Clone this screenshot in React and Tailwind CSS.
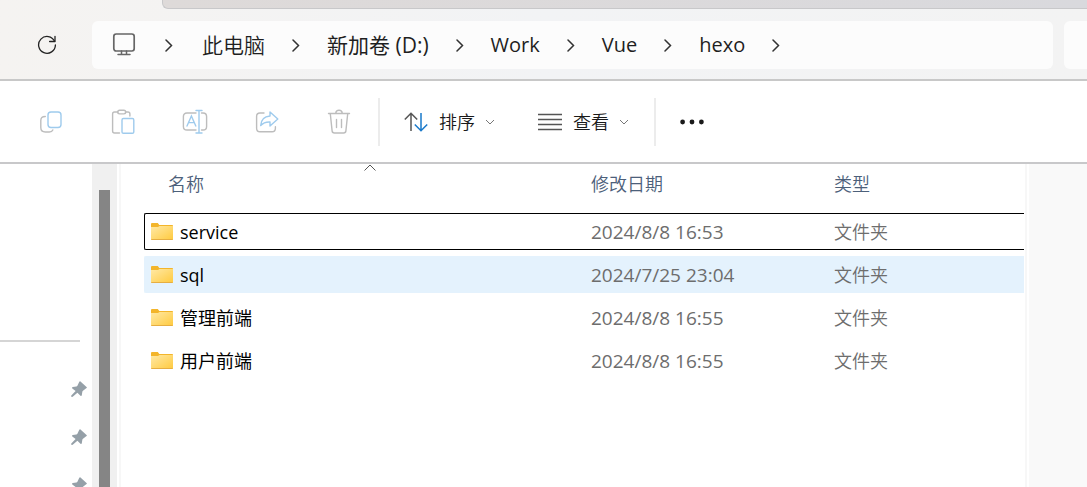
const crumbs = [
  { label: "此电脑", size: "text-[21px] font-[350]" },
  { label: "新加卷 (D:)", size: "text-[21px]" },
  { label: "Work", size: "text-xl" },
  { label: "Vue", size: "text-xl" },
  { label: "hexo", size: "text-xl" },
];

const files = [
  { name: "service", date: "2024/8/8 16:53", type: "文件夹", state: "focused" },
  { name: "sql", date: "2024/7/25 23:04", type: "文件夹", state: "hovered" },
  { name: "管理前端", date: "2024/8/8 16:55", type: "文件夹" },
  { name: "用户前端", date: "2024/8/8 16:55", type: "文件夹" },
];

const RefreshIcon = () => (
  <svg width="20" height="20" viewBox="0 0 20 20" fill="none" stroke="#222" strokeWidth="1.3">
    <path d="M17.6 6.3A8.4 8.4 0 1 0 18.4 10" strokeLinecap="round" />
    <path d="M18 1.3v5.2h-5.4" strokeLinecap="round" strokeLinejoin="round" />
  </svg>
);

const MonitorIcon = () => (
  <svg width="24" height="24" viewBox="0 0 24 24" fill="none" stroke="#666" strokeWidth="1.7">
    <rect x="1.8" y="1" width="20.4" height="17" rx="2.4" />
    <path d="M9.5 18v3.4M14.5 18v3.4M6 21.5h12" strokeWidth="1.5" strokeLinecap="round" />
  </svg>
);

const ChevronRight = () => (
  <svg width="8" height="14" viewBox="0 0 8 14" fill="none" stroke="#333" strokeWidth="1.5">
    <path d="M1 2 6.5 7.5 1 13" strokeLinecap="round" />
  </svg>
);

const ChevronDown = () => (
  <svg width="10" height="6" viewBox="0 0 10 6" fill="none" stroke="#777" strokeWidth="1">
    <path d="M1 1l4 4 4-4" />
  </svg>
);

const CopyIcon = () => (
  <svg width="24" height="24" viewBox="0 0 24 24" fill="none" strokeWidth="1.4" strokeLinecap="round">
    <path d="M6.3 6.5C3 6.5 1.8 7.8 1.8 10.5v7c0 2.9 1.7 4.5 4.5 4.5h4c2 0 3-.7 3.5-2" stroke="#bdbdbd" />
    <rect x="9" y="2" width="13" height="15.5" rx="3" stroke="#9fcbed" />
  </svg>
);

const PasteIcon = () => (
  <svg width="24" height="26" viewBox="0 0 24 26" fill="none" strokeWidth="1.4" strokeLinecap="round">
    <path d="M7 3H3.5C2.3 3 1.6 3.7 1.6 4.9v17.2c0 1.2.7 1.9 1.9 1.9H8.5M14.5 3H17c1.2 0 1.9.7 1.9 1.9V7" stroke="#bdbdbd" />
    <rect x="6.7" y="1.3" width="8" height="3.6" rx="1.8" stroke="#bdbdbd" />
    <rect x="11" y="9.5" width="11.8" height="14.8" rx="1.4" stroke="#9fcbed" />
  </svg>
);

const RenameIcon = () => (
  <svg width="26" height="26" viewBox="0 0 26 26" fill="none" strokeWidth="1.4" strokeLinecap="round">
    <path d="M14 4H5C2.6 4 1.4 5.2 1.4 7.6v9.8C1.4 19.8 2.6 21 5 21h9M19.5 4h1.5c2.4 0 3.6 1.2 3.6 3.6v9.8c0 2.4-1.2 3.6-3.6 3.6h-1.5" stroke="#bdbdbd" />
    <path d="M5 17l4.4-10 4.4 10M6.6 13.6h5.6" stroke="#9fcbed" />
    <path d="M14 1.5h6M17 1.5v22.5M14 24h6" stroke="#9fcbed" />
  </svg>
);

const ShareIcon = () => (
  <svg width="24" height="24" viewBox="0 0 24 24" fill="none" strokeWidth="1.4" strokeLinecap="round" strokeLinejoin="round">
    <path d="M9 3H5C2.7 3 1.6 4.2 1.6 6.4v11.8c0 2.3 1.2 3.5 3.4 3.5h12c2.2 0 3.4-1.2 3.4-3.5v-1.4" stroke="#bdbdbd" />
    <path d="M15 2l7.8 7-7.8 7v-4c-4-.2-7 .9-9.3 3.6C6 10.3 9 6.5 15 6z" stroke="#9fcbed" />
  </svg>
);

const TrashIcon = () => (
  <svg width="24" height="26" viewBox="0 0 24 26" fill="none" stroke="#bdbdbd" strokeWidth="1.4" strokeLinecap="round">
    <path d="M1.5 4.5h21M8.7 4.3c.2-2 1.4-3 3.3-3s3.1 1 3.3 3" />
    <path d="M3.3 4.7l1.8 17.2c.1 1.4.9 2.1 2.3 2.1h9.2c1.4 0 2.2-.7 2.3-2.1l1.8-17.2" />
    <path d="M9.5 10.5v8M14.5 10.5v8" />
  </svg>
);

const SortIcon = () => (
  <svg width="24" height="20" viewBox="0 0 24 20" fill="none" strokeWidth="1.5">
    <path d="M7 19V1M.8 7.5 7 1.2l6.2 6.3" stroke="#555" />
    <path d="M17 1v18M10.8 12.5l6.2 6.3 6.2-6.3" stroke="#1979ca" />
  </svg>
);

const ViewIcon = () => (
  <svg width="24" height="18" viewBox="0 0 24 18" stroke="#555" strokeWidth="1.4">
    <path d="M0 1.5h24M0 6.5h24M0 11.5h24M0 16.5h24" />
  </svg>
);

const MoreIcon = () => (
  <svg width="24" height="6" viewBox="0 0 24 6" fill="#1a1a1a">
    <circle cx="2.6" cy="3" r="2.4" />
    <circle cx="12" cy="3" r="2.4" />
    <circle cx="21.4" cy="3" r="2.4" />
  </svg>
);

const PinIcon = () => (
  <svg width="16" height="16" viewBox="0 0 16 16" fill="#95a0a8">
    <path d="M9.2.2 15.8 6.2c.2.5-.1.9-.6 1L12 9.7c-.5.4-.6.7-.7 1.3l-.5 3.3c-.2.7-.8.9-1.3.4L6.4 11.7l-4.7 4.1c-.8.5-1.9-.5-1.4-1.3l4.3-4.6L1.3 7.4c-.5-.6-.2-1.1.5-1.3l3.5-.6c.6-.1.9-.3 1.1-.8L8.3.8c.2-.5.5-.7.9-.6z" />
  </svg>
);

const FolderIcon = () => (
  <svg width="22" height="18" viewBox="0 0 22 18" className="shrink-0">
    <defs>
      <linearGradient id="folder" x1="0" y1="0" x2="1" y2="1">
        <stop offset="0" stopColor="#ffe9a6" />
        <stop offset="1" stopColor="#ffca3e" />
      </linearGradient>
    </defs>
    <path d="M0 1.2C0 .4.5 0 1.2 0h5.6l1.5 2H21c.6 0 1 .4 1 1V8H0z" fill="#f3b52b" />
    <path d="M0 4h7l1.5-1H22V16c0 .6-.4 1-1 1H1c-.6 0-1-.4-1-1z" fill="url(#folder)" />
    <path d="M.3 16.5h21.4" stroke="#e6ae42" />
  </svg>
);

const tools = [
  { label: "复制", Icon: CopyIcon },
  { label: "粘贴", Icon: PasteIcon },
  { label: "重命名", Icon: RenameIcon },
  { label: "共享", Icon: ShareIcon },
  { label: "删除", Icon: TrashIcon },
];

const AddressBar = () => (
  <header className="shrink-0 bg-linear-to-r from-[#f5f3f1] via-[#f2f3f5] to-[#f3f3f3] border-b-2 border-[#c8c8c8]">
    <div className="ml-[162px] h-[9px] rounded-bl-md border-b border-l border-[#c8c8ca] bg-linear-to-r from-[#dedad9] to-[#d9d9dd]"></div>
    <div className="flex items-center pt-3 pb-2.5">
      <button aria-label="刷新" className="flex justify-center w-5 ml-[37px] mr-[35px]">
        <RefreshIcon />
      </button>
      <nav className="flex flex-1 items-center h-12 pl-5 rounded-md bg-[#fcfcfc] text-[#1f1f1f]">
        <MonitorIcon />
        <button aria-label="展开" className="mx-[29px]">
          <ChevronRight />
        </button>
        {crumbs.map((crumb) => (
          <div key={crumb.label} className="flex items-center">
            <button className={`${crumb.size} leading-7 whitespace-nowrap`}>
              {crumb.label}
            </button>
            <button aria-label="展开" className="mx-[27px]">
              <ChevronRight />
            </button>
          </div>
        ))}
      </nav>
      <div className="w-[23px] h-12 ml-[11px] rounded-l-md bg-[#fcfcfc]"></div>
    </div>
  </header>
);

const Toolbar = () => (
  <div className="flex shrink-0 items-center h-[83px] pl-[27px] border-b-2 border-[#c8c8ca] text-lg font-[350] text-[#1a1a1a]">
    <div className="flex gap-6">
      {tools.map(({ label, Icon }) => (
        <button key={label} aria-label={label} disabled className="flex items-center justify-center size-12">
          <Icon />
        </button>
      ))}
    </div>
    <div className="w-0.5 h-12 ml-[15px] mr-6 bg-[#ececec]"></div>
    <button className="flex items-center mr-[43px]">
      <SortIcon />
      <span className="ml-[11px] mr-2.5">排序</span>
      <ChevronDown />
    </button>
    <button className="flex items-center">
      <ViewIcon />
      <span className="ml-[11px] mr-2.5">查看</span>
      <ChevronDown />
    </button>
    <div className="w-0.5 h-12 ml-[25px] mr-6 bg-[#ececec]"></div>
    <button aria-label="更多">
      <MoreIcon />
    </button>
  </div>
);

const Sidebar = () => (
  <aside className="flex shrink-0 overflow-hidden">
    <div className="w-[92px] pt-44">
      <div className="w-20 h-0.5 bg-[#d5d5d5]"></div>
      <div className="flex flex-col items-end gap-8 pt-[39px] pr-[5px]">
        <PinIcon />
        <PinIcon />
        <PinIcon />
      </div>
    </div>
    <div className="w-[25px] pt-[26px] px-[7px] bg-[#f0f0f0]">
      <div className="h-full bg-[#858585]"></div>
    </div>
  </aside>
);

const rowStyles = {
  focused: "border-black",
  hovered: "border-[#e4f2fd] bg-[#e4f2fd]",
  normal: "border-transparent",
};

const FileTable = () => (
  <table className="w-full table-fixed border-separate border-spacing-x-0 border-spacing-y-1.5 text-lg leading-6 text-left">
    <thead>
      <tr className="h-[37px] text-[#4c607a]">
        <th className="relative w-[447px] pl-6 pb-2.5 font-[350]">
          名称
          <svg width="12" height="7" viewBox="0 0 12 7" fill="none" stroke="#555" className="absolute -top-1.5 left-1/2 -ml-1">
            <path d="M.5 6.5 6 1l5.5 5.5" />
          </svg>
        </th>
        <th className="w-[243px] pb-2.5 font-[350]">修改日期</th>
        <th className="pb-2.5 font-[350]">类型</th>
      </tr>
    </thead>
    <tbody>
      {files.map((file) => {
        const cell = `border-y ${rowStyles[file.state || "normal"]}`;
        return (
          <tr key={file.name} className="h-[37px]">
            <td className={`${cell} border-l rounded-l-xs pl-1.5 text-black`}>
              <div className="flex items-center gap-[7px]">
                <FolderIcon />
                {file.name}
              </div>
            </td>
            <td className={`${cell} text-[19px] text-[#6d6d6d]`}>{file.date}</td>
            <td className={`${cell} font-[350] text-[#6d6d6d]`}>{file.type}</td>
          </tr>
        );
      })}
    </tbody>
  </table>
);

const App = () => {
  return (
    <div className="flex flex-col h-screen overflow-hidden bg-white font-['Open_Sans','Noto_Sans_CJK_SC',sans-serif]">
      <AddressBar />
      <Toolbar />
      <div className="flex flex-1 min-h-0">
        <Sidebar />
        <main className="flex-1 ml-0.5 pl-[23px] pr-px border-x-2 border-[#f7f7f7]">
          <FileTable />
        </main>
        <div className="w-[58px] ml-0.5 bg-[#f9f9f9]"></div>
      </div>
    </div>
  );
};

export default App;
